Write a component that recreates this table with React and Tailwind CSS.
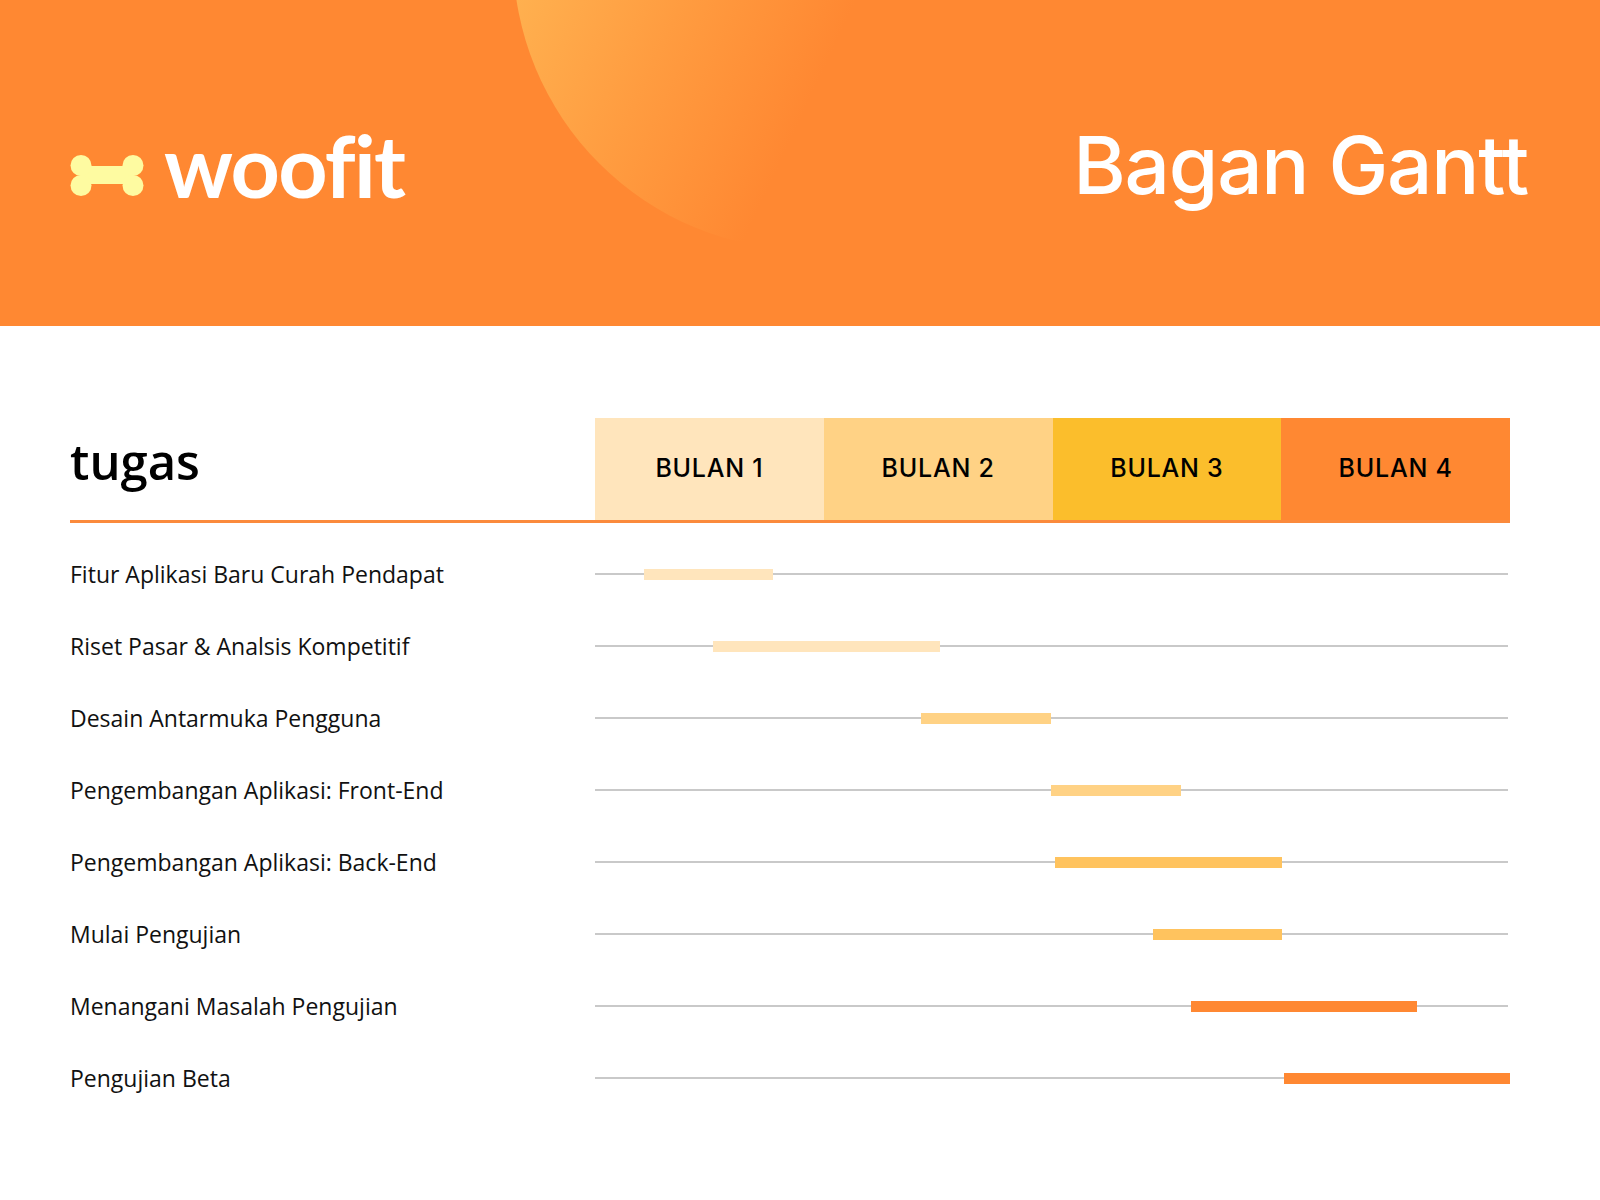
import React from 'react'

const months = [
  { label: 'BULAN 1', cls: 'bg-[#FFE5BC]' },
  { label: 'BULAN 2', cls: 'bg-[#FFD285]' },
  { label: 'BULAN 3', cls: 'bg-[#FBBE2C]' },
  { label: 'BULAN 4', cls: 'bg-[#FF8832]' },
]

// left / width in px on a 915px timeline
const tasks = [
  { name: 'Fitur Aplikasi Baru Curah Pendapat', left: 49, width: 129, cls: 'bg-[#FFE5BC]' },
  { name: 'Riset Pasar & Analsis Kompetitif', left: 118, width: 227, cls: 'bg-[#FFE5BC]' },
  { name: 'Desain Antarmuka Pengguna', left: 326, width: 130, cls: 'bg-[#FFD285]' },
  { name: 'Pengembangan Aplikasi: Front-End', left: 456, width: 130, cls: 'bg-[#FFD285]' },
  { name: 'Pengembangan Aplikasi: Back-End', left: 460, width: 227, cls: 'bg-[#FFC35E]' },
  { name: 'Mulai Pengujian', left: 558, width: 129, cls: 'bg-[#FFC35E]' },
  { name: 'Menangani Masalah Pengujian', left: 596, width: 226, cls: 'bg-[#FF8832]' },
  { name: 'Pengujian Beta', left: 689, width: 226, cls: 'bg-[#FF8832]' },
]

function Bone() {
  return (
    <svg width="74" height="41" viewBox="0 0 74 41" className="mb-[12px] shrink-0">
      <g fill="#FEFBA1">
        <rect x="11" y="11" width="52" height="18" />
        <circle cx="11" cy="10.5" r="10.5" />
        <circle cx="11" cy="30.5" r="10.5" />
        <circle cx="63" cy="10.5" r="10.5" />
        <circle cx="63" cy="30.5" r="10.5" />
      </g>
    </svg>
  )
}

export default function App() {
  return (
    <div className="min-h-[1200px] w-full bg-white">
      {/* Header */}
      <header className="relative h-[326px] overflow-hidden bg-[#FF8832]">
        <div className="absolute left-[513px] top-[-340px] h-[590px] w-[590px] rounded-full bg-[linear-gradient(115deg,#FFB452_15%,#FF9C40_38%,#FF8832_58%)]" />
        <div className="relative flex items-start justify-between pl-[70px] pr-[72px] pt-[122px]">
          <div className="flex items-end gap-[20px]">
            <Bone />
            <span className="text-[86px] font-bold leading-none tracking-[-0.02em] text-white [font-family:Lato,sans-serif]">
              woofit
            </span>
          </div>
          <h1 className="mt-[3px] text-[80px] font-medium leading-none tracking-[-0.015em] text-white [font-family:Inter,sans-serif]">
            Bagan Gantt
          </h1>
        </div>
      </header>

      {/* Chart */}
      <main className="pl-[70px] pr-[90px] pt-[92px]">
        <div className="flex items-start">
          <div className="w-[525px] pt-[19px]">
            <h2 className="text-[49px] font-semibold leading-none text-black [font-family:'Open_Sans',sans-serif]">
              tugas
            </h2>
          </div>
          <div className="grid h-[102px] w-[915px] grid-cols-4">
            {months.map((m) => (
              <div key={m.label} className={`flex items-center justify-center ${m.cls}`}>
                <span className="text-[25px] font-medium tracking-[0.03em] text-black [font-family:Inter,sans-serif]">
                  {m.label}
                </span>
              </div>
            ))}
          </div>
        </div>
        <div className="h-[3px] w-[1440px] bg-[#FB8A3C]" />

        <div className="pt-[15px]">
          {tasks.map((t) => (
            <div key={t.name} className="flex h-[72px] items-center">
              <div className="w-[525px] text-[23px] leading-[30px] text-[#111] [font-family:'Open_Sans',sans-serif]">
                {t.name}
              </div>
              <div className="relative flex h-[11px] w-[915px]">
                <div className="absolute left-0 right-[2px] top-1/2 h-[2px] -translate-y-1/2 bg-[#C9C9C9]" />
                <div
                  className={`relative h-[11px] ${t.cls}`}
                  style={{ marginLeft: t.left, width: t.width }}
                />
              </div>
            </div>
          ))}
        </div>
      </main>
    </div>
  )
}
